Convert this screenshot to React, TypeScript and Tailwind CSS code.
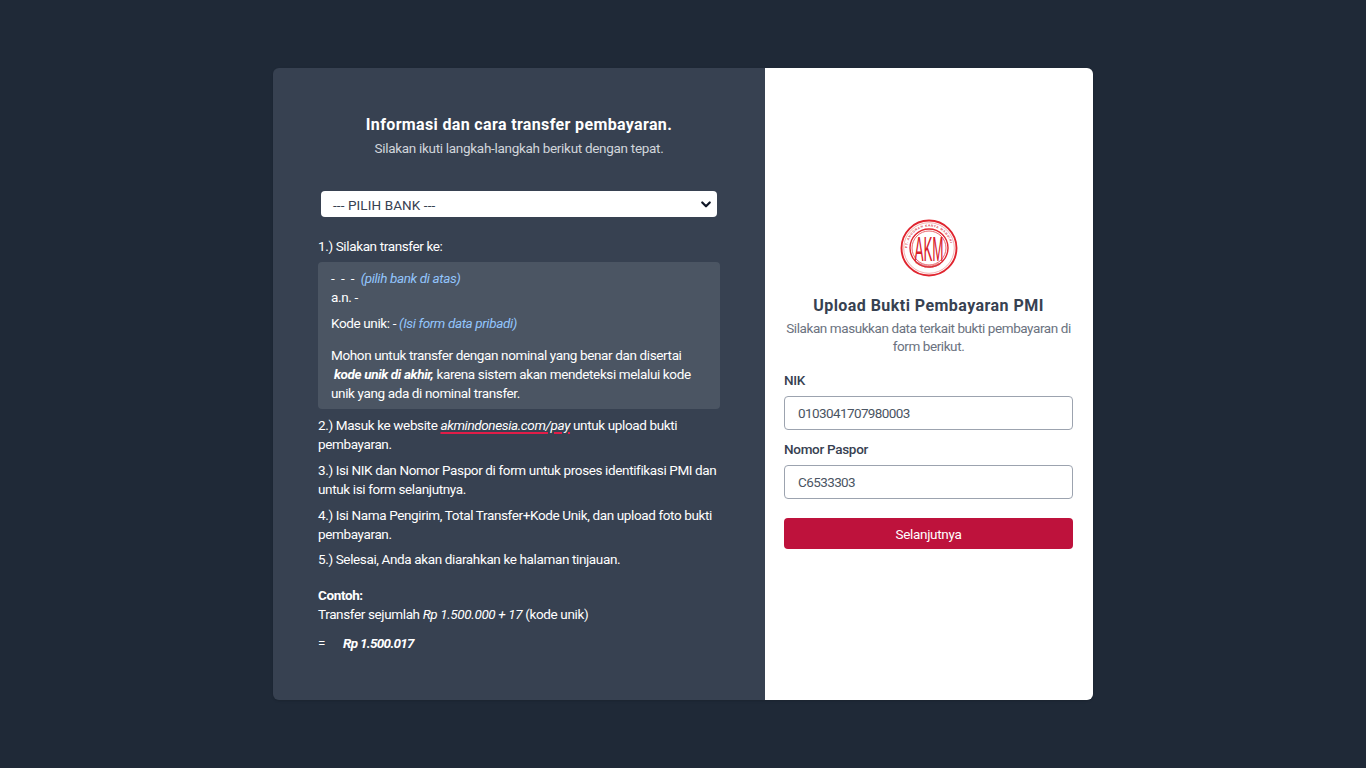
const Logo = () => (
  <svg width="58" height="58" viewBox="0 0 58 58" className="block">
    <defs>
      <path id="ring-top" d="M 7.5 33 A 21.8 21.8 0 1 1 50.5 33" />
      <path id="ring-bottom" d="M 12 40 A 21 21 0 0 0 46 40" />
    </defs>
    <circle cx="29" cy="29" r="27.5" fill="none" stroke="#e0252f" strokeWidth="1.9" />
    <circle cx="29" cy="29" r="25.3" fill="none" stroke="#ee8f8f" strokeWidth="0.7" />
    <circle cx="29" cy="29" r="19" fill="none" stroke="#e0252f" strokeWidth="1.4" />
    <circle cx="29" cy="29" r="17" fill="none" stroke="#e0252f" strokeWidth="0.7" />
    <text fontSize="3.2" fill="#d8434a" fontFamily="'Liberation Sans', sans-serif" fontWeight="700">
      <textPath href="#ring-top" textLength="62" startOffset="4">PT. ANUGRAH KARYA MANDIRI</textPath>
    </text>
    <text fontSize="3.2" fill="#d8434a" fontFamily="'Liberation Sans', sans-serif" fontWeight="700">
      <textPath href="#ring-bottom" textLength="27" startOffset="5">LEMBAGA INDONESIA</textPath>
    </text>
    <text x="29" y="41.5" textAnchor="middle" fontSize="35" fill="#d8202b" textLength="29" lengthAdjust="spacingAndGlyphs" fontFamily="'Liberation Sans', sans-serif">AKM</text>
  </svg>
);

const Rule = ({ children, className = '' }: { children: React.ReactNode; className?: string }) => (
  <p className={`leading-[19px] ${className}`}>{children}</p>
);

export default function App() {
  return (
    <div className="min-h-screen bg-[#1f2937] flex items-center justify-center font-['Roboto',sans-serif]">
      <div className="w-[820px] h-[632px] flex rounded-md overflow-hidden shadow">
        {/* Left panel */}
        <div className="w-[492px] bg-[#374151] px-[45px] pt-[47px] text-[13.5px] tracking-[-0.37px] text-white">
          <h2 className="text-center text-[16px] font-bold leading-[20px] tracking-[0.35px]">Informasi dan cara transfer pembayaran.</h2>
          <p className="text-center text-[#d1d5db] leading-[20px] mt-[3px] tracking-[-0.3px]">Silakan ikuti langkah-langkah berikut dengan tepat.</p>

          <div className="mx-[3px] mt-[33px] h-[26px] bg-white rounded flex items-center justify-between pl-[12px] pr-[5px] text-[13.5px] tracking-[0.1px] text-[#374151]">
            <span className="pt-[2px]">--- PILIH BANK ---</span>
            <svg width="12" height="12" viewBox="0 0 16 16" fill="none" stroke="#111827" strokeWidth="3" strokeLinecap="round" strokeLinejoin="round">
              <path d="M3 6l5 5 5-5" />
            </svg>
          </div>

          <Rule className="mt-[20px]">1.) Silakan transfer ke:</Rule>

          <div className="mt-[6px] bg-[#4b5563] rounded px-[13px] pt-[7px] h-[147px]">
            <p className="leading-[19px]">
              <span className="tracking-[1.4px]">- - - </span>
              <i className="text-[#93c5fd]">(pilih bank di atas)</i>
            </p>
            <p className="leading-[19px]">a.n. -</p>
            <p className="leading-[19px] mt-[7px]">
              Kode unik: - <i className="text-[#93c5fd]">(Isi form data pribadi)</i>
            </p>
            <p className="leading-[19px] mt-[13px]">
              Mohon untuk transfer dengan nominal yang benar dan disertai
              <br />
              <b className="italic">&nbsp;kode unik di akhir,</b> karena sistem akan mendeteksi melalui kode unik yang ada di nominal transfer.
            </p>
          </div>

          <Rule className="mt-[7px]">
            2.) Masuk ke website{' '}
            <i className="underline decoration-[1.5px] underline-offset-2 decoration-[#e11d48]">akmindonesia.com/pay</i> untuk upload bukti pembayaran.
          </Rule>
          <Rule className="mt-[7px]">3.) Isi NIK dan Nomor Paspor di form untuk proses identifikasi PMI dan untuk isi form selanjutnya.</Rule>
          <Rule className="mt-[7px]">4.) Isi Nama Pengirim, Total Transfer+Kode Unik, dan upload foto bukti pembayaran.</Rule>
          <Rule className="mt-[6px]">5.) Selesai, Anda akan diarahkan ke halaman tinjauan.</Rule>

          <Rule className="mt-[17px] font-bold">Contoh:</Rule>
          <Rule>
            Transfer sejumlah <i>Rp 1.500.000 + 17</i> (kode unik)
          </Rule>
          <Rule className="mt-[10px]">
            =<b className="italic ml-[18px] tracking-[-0.7px]">Rp 1.500.017</b>
          </Rule>
        </div>

        {/* Right panel */}
        <div className="w-[328px] bg-white flex flex-col items-stretch pl-[19px] pr-[20px] pt-[151px] text-[13.5px] tracking-[-0.3px]">
          <div className="flex justify-center">
            <Logo />
          </div>
          <h2 className="mt-[19px] text-center text-[16px] font-bold leading-[20px] tracking-[0.45px] text-[#374151]">Upload Bukti Pembayaran PMI</h2>
          <p className="mt-[3px] text-center leading-[18px] tracking-[-0.42px] text-[#6b7280]">Silakan masukkan data terkait bukti pembayaran di form berikut.</p>

          <label className="mt-[15px] font-medium leading-[20px] text-[#374151]">NIK</label>
          <input
            readOnly
            value="0103041707980003"
            className="mt-[6px] h-[34px] rounded border border-[#9ca3af] px-[13px] tracking-[-0.6px] text-[#4b5563] outline-none"
          />
          <label className="mt-[9px] font-medium leading-[20px] text-[#374151]">Nomor Paspor</label>
          <input
            readOnly
            value="C6533303"
            className="mt-[6px] h-[34px] rounded border border-[#9ca3af] px-[13px] tracking-[-0.6px] text-[#4b5563] outline-none"
          />
          <button className="mt-[19px] h-[31px] pt-[1px] rounded bg-[#be123c] text-white">Selanjutnya</button>
        </div>
      </div>
    </div>
  );
}
